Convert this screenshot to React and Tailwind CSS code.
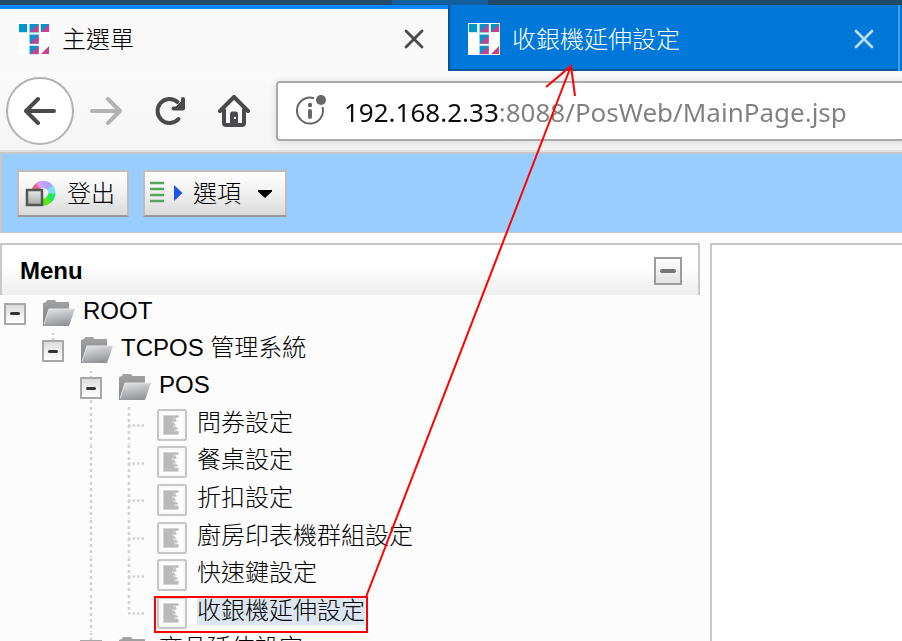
import React from "react";

const cjk = "font-['Liberation_Sans','Noto_Sans_CJK_TC',sans-serif]";

function Favicon() {
  return (
    <svg className="size-8 shrink-0" viewBox="0 0 32 32" aria-hidden="true">
      <rect width="32" height="32" fill="#fff" />
      <g fill="#8fd0e8">
        <rect x="11" y="1" width="10" height="9" />
        <rect x="22.500" y="1" width="9" height="8" />
        <rect x="11" y="11" width="10" height="10" />
        <rect x="11" y="22.500" width="10" height="9" />
        <rect x="1" y="8.500" width="8.500" height="1" />
      </g>
      <g fill="#0095cd">
        <rect x="1" y="1" width="8" height="8" />
        <rect x="12" y="1" width="8.500" height="8" />
        <rect x="23" y="1" width="8" height="8" />
        <rect x="12" y="12" width="8.500" height="8.500" />
        <rect x="12" y="23" width="8.500" height="8" />
      </g>
      <g fill="#cc3f8f">
        <path d="M20.500 1V9H12ZM31 1V9H23ZM20.500 12V20.500H12ZM20.500 23V31H12ZM31 23V31H23Z" />
      </g>
    </svg>
  );
}

function Tab({ title, className, closeClass }) {
  return (
    <div className={"flex shrink-0 items-center pr-6 " + className}>
      <Favicon />
      <span className="ml-3 flex-1 pt-0.5 text-2xl font-light">{title}</span>
      <button type="button" aria-label={"關閉 " + title} className={closeClass}>
        <svg className="size-5" viewBox="0 0 20 20" fill="none" stroke="currentColor" strokeWidth="2.8" strokeLinecap="round" aria-hidden="true">
          <path d="M2 2L18 18M18 2L2 18" />
        </svg>
      </button>
    </div>
  );
}

function NavIcon({ children }) {
  return (
    <svg className="size-8" viewBox="0 0 32 32" fill="none" stroke="currentColor" strokeWidth="4" strokeLinecap="round" strokeLinejoin="round" aria-hidden="true">
      {children}
    </svg>
  );
}

function Folder() {
  return (
    <svg className="mb-0.5 ml-[5px] h-[26px] w-8 shrink-0" viewBox="0 0 32 26" aria-hidden="true">
      <defs>
        <linearGradient id="folderFront" x1="0.300" y1="0" x2="0.600" y2="1">
          <stop offset="0" stopColor="#dedfe1" />
          <stop offset="1" stopColor="#8f9194" />
        </linearGradient>
        <linearGradient id="folderBack" x1="0" y1="0" x2="0" y2="1">
          <stop offset="0" stopColor="#a3a3a3" />
          <stop offset="1" stopColor="#808285" />
        </linearGradient>
      </defs>
      <path d="M0 26V3L3 2L4 0H12L13.500 2H26V10L20 26Z" fill="url(#folderBack)" />
      <path d="M1 25L6 9H32L26 26H1Z" fill="url(#folderFront)" />
      <path d="M1 24.500L6 9H31.500" fill="none" stroke="#e4e5e6" />
    </svg>
  );
}

function Page() {
  return (
    <svg className="ml-[5px] h-8 w-[30px] shrink-0" viewBox="0 0 30 32" aria-hidden="true">
      <rect x="1" y="1" width="28" height="30" rx="1.500" fill="#fff" stroke="#c6c6c6" strokeWidth="2" />
      <rect x="3" y="3" width="24" height="26" fill="none" stroke="#f1f1f1" strokeWidth="1" />
      <path d="M6 6H22V8.500L19 9V11L21 12L17 13.500V15L20 16L18 18L22 19.500L19 21L22 22V24L21 26H6Z" fill="#d3d3d3" />
      <path d="M7 7H21V8.500H16V10.500H19V12H15V14.500H18V16H16V18.500H20V20H17V22.500H21V25H7Z" fill="#bababa" />
    </svg>
  );
}

function Guide({ vertical, branch, end }) {
  return (
    <svg className="h-full w-[38px] shrink-0" stroke="#d2d2d2" strokeWidth="2.5" aria-hidden="true">
      {vertical && <line x1="15" y1="1" x2="15" y2={end ? "52%" : "100%"} strokeDasharray="3 3" />}
      {branch && <line x1="14" y1="52%" x2="32" y2="52%" strokeDasharray="2.5 2" />}
    </svg>
  );
}

function Toggle({ label, above, below }) {
  return (
    <span className="flex h-full w-[38px] shrink-0 flex-col pl-1">
      <svg className="min-h-0 w-[22px] flex-1" stroke="#d2d2d2" strokeWidth="2.5" aria-hidden="true">
        {above && <line x1="11" y1="1" x2="11" y2="100%" strokeDasharray="2 3" />}
      </svg>
      <button type="button" aria-label={"收合 " + label} className="flex size-[22px] items-center justify-center border-2 border-[#a8a8a8] bg-gradient-to-b from-[#dcdcdc] to-white">
        <span className="h-[3px] w-2.5 rounded-full bg-[#333]" />
      </button>
      <svg className="min-h-0 w-[22px] flex-1" stroke="#d2d2d2" strokeWidth="2.5" aria-hidden="true">
        {below && <line x1="11" y1="1" x2="11" y2="100%" strokeDasharray="3 3" />}
      </svg>
    </span>
  );
}

function Branch({ depth, label, height, above, below }) {
  return (
    <div className={"flex items-center " + height}>
      {Array.from({ length: depth }, (_, i) => (
        <Guide key={i} />
      ))}
      <Toggle label={label} above={above} below={below} />
      <Folder />
      <span className="ml-2 pb-1.5 text-2xl leading-7 font-light">{label}</span>
    </div>
  );
}

const leaves = ["問券設定", "餐桌設定", "折扣設定", "廚房印表機群組設定", "快速鍵設定", "收銀機延伸設定"];

function Leaf({ label, last }) {
  return (
    <li className="flex min-h-0 items-center">
      <Guide />
      <Guide />
      <Guide vertical />
      <Guide vertical branch end={last} />
      <Page />
      <span className="ml-2.5 pb-1">
        <a href="#" className={"block text-2xl leading-7 font-light " + (last ? "bg-[#dce6f1]" : "")}>{label}</a>
      </span>
    </li>
  );
}

const toolButton =
  "flex h-[47px] items-center border-2 border-[#bdbdbd] border-b-[#999] bg-gradient-to-b from-white via-[#f0f0f0] to-[#dadada] text-2xl font-light";

export default function App() {
  return (
    <div className={"relative flex h-screen flex-col overflow-hidden bg-[#fcfcfc] text-black " + cjk}>
      <div className="flex h-[5px] shrink-0 bg-[#214a66]">
        <span className="ml-[392px] w-24 bg-[#1260a0]" />
      </div>
      <div className="flex h-[66px] shrink-0 bg-[#0078d9]">
        <Tab title="主選單" className="w-[448px] border-t-4 border-[#0a84ff] bg-[#f9f9fa] pb-0.5 pl-[18px]" closeClass="text-[#4a4a4c]" />
        <Tab title="收銀機延伸設定" className="w-[450px] border-b-2 border-l-2 border-[#00559b] pt-1 pl-[18px] text-white" closeClass="text-[#b8dbf7]" />
        <span className="w-0.5 bg-[#4a9fe4]" />
      </div>

      <div className="flex h-[79px] shrink-0 items-center overflow-hidden bg-gradient-to-b from-[#fafafa] to-[#f5f5f6] pl-1.5 text-[#4a4a4c]">
        <button type="button" aria-label="上一頁" className="flex size-[68px] shrink-0 items-center justify-center rounded-full border-2 border-[#b1b1b1] bg-white">
          <NavIcon><path d="M30 16H3M14 4L2 16L14 28" /></NavIcon>
        </button>
        <button type="button" aria-label="下一頁" className="ml-4 shrink-0 text-[#b3b3b3]">
          <NavIcon><path d="M2 16H29M18 4L30 16L18 28" /></NavIcon>
        </button>
        <button type="button" aria-label="重新整理" className="ml-8 shrink-0">
          <NavIcon>
            <path d="M24.500 24A12 12 0 1 1 23.500 7" />
            <path d="M29 4V13.500H19.500" />
            <path d="M29 5L21 13H29Z" fill="currentColor" strokeWidth="1" />
          </NavIcon>
        </button>
        <button type="button" aria-label="首頁" className="ml-8 shrink-0">
          <NavIcon>
            <path d="M2 16L16 2L30 16" />
            <path d="M6 15V28Q6 30 8 30H24Q26 30 26 28V15" />
            <path d="M12 30V19Q12 16.500 14 16.500H18Q20 16.500 20 19V30Z" fill="currentColor" stroke="none" />
            <rect x="16" y="22" width="2" height="2" fill="#fff" stroke="none" />
          </NavIcon>
        </button>
        <div className="-mr-2 ml-[26px] flex h-[60px] min-w-0 flex-1 items-center rounded border-2 border-[#aaa] bg-white pl-[18px] shadow-[0_1px_8px_rgba(0,0,0,0.12)]">
          <svg className="size-8 shrink-0" viewBox="0 0 32 32" fill="none" aria-hidden="true">
            <path d="M18 3.200A13 13 0 1 0 26.500 12" stroke="#666" strokeWidth="2" />
            <circle cx="25" cy="5" r="5" fill="#666" />
            <circle cx="14" cy="10" r="2.200" fill="#666" />
            <path d="M14 16V22" stroke="#666" strokeWidth="4" strokeLinecap="round" />
          </svg>
          <input
            type="text"
            aria-label="網址"
            defaultValue="192.168.2.33:8088/PosWeb/MainPage.jsp"
            className="ml-4 h-10 min-w-0 flex-1 bg-[linear-gradient(90deg,#0c0c0d_154px,#808080_154px)] bg-clip-text pt-0.5 font-['Noto_Sans',sans-serif] text-[26px] text-transparent outline-none"
          />
        </div>
      </div>

      <div className="flex shrink-0 border-t-2 border-[#e0e0e0]">
        <div className="flex flex-1 gap-3.5 border-t-2 border-b border-l-2 border-[#c8c8c8] bg-[#99ccff] pt-4 pb-[15px] pl-[15px]">
          <button type="button" className={toolButton + " w-28 pl-1.5"}>
            <svg className="h-7 w-8" viewBox="0 0 32 28" aria-hidden="true">
              <defs>
                <linearGradient id="swatch" x1="0" y1="0" x2="0" y2="1">
                  <stop offset="0" stopColor="#e8ebe8" />
                  <stop offset="1" stopColor="#a5aca5" />
                </linearGradient>
              </defs>
              <g fill="none" strokeWidth="7">
                <path d="M10 11A9 9 0 0 1 14 5.500" stroke="#e2668c" />
                <path d="M13 6A9 9 0 0 1 20 4.500" stroke="#d59cf0" />
                <path d="M19.500 4.500A9 9 0 0 1 25.500 8" stroke="#a9a6ff" />
                <path d="M25 7.500A9 9 0 0 1 27 14" stroke="#80dcf0" />
                <path d="M27 13.500A9 9 0 0 1 23.500 20" stroke="#1ee85a" />
                <path d="M24 19.500A9 9 0 0 1 16 22" stroke="#5be71a" />
              </g>
              <rect x="2" y="10" width="15" height="15" fill="url(#swatch)" stroke="#555" strokeWidth="2.500" />
            </svg>
            <span className="ml-2.5">登出</span>
          </button>
          <button type="button" className={toolButton + " w-36 pl-1"}>
            <svg className="mb-1 h-6 w-9" viewBox="0 0 36 24" aria-hidden="true">
              <path d="M1 3H15M1 9H15M1 15H15M1 21H15" stroke="#5aa35f" strokeWidth="2.500" />
              <path d="M25 5L33.500 13L25 21Z" fill="#1f55ee" />
            </svg>
            <span className="ml-2">選項</span>
            <svg className="ml-4 h-2 w-4" viewBox="0 0 16 8" aria-hidden="true">
              <path d="M1 0H15V1.500L8 8L1 1.500Z" fill="#000" />
            </svg>
          </button>
        </div>
      </div>

      <main className="mt-2.5 flex min-h-0 flex-1 gap-2.5">
        <nav aria-label="Menu" className="w-[700px] shrink-0">
          <div className="flex h-[52px] items-center justify-between border-x-2 border-t-2 border-[#c8c8c8] bg-gradient-to-b from-white from-40% to-[#eeeeee] pt-0.5 pr-4 pl-[18px]">
            <h2 className="text-2xl font-bold">Menu</h2>
            <button type="button" aria-label="收合 Menu" className="flex size-7 items-center justify-center border-2 border-[#9c9c9c] bg-gradient-to-b from-white to-[#e2e2e2]">
              <span className="h-1 w-4 rounded-full bg-[#777]" />
            </button>
          </div>
          <Branch depth={0} label="ROOT" height="h-[37px]" />
          <Branch depth={1} label="TCPOS 管理系統" height="h-[38px]" above />
          <Branch depth={2} label="POS" height="h-9" above below />
          <ul className="grid h-[226px] grid-rows-6">
            {leaves.map((label, i) => (
              <Leaf key={label} label={label} last={i === leaves.length - 1} />
            ))}
          </ul>
          <Branch depth={2} label="商品延伸設定" height="h-[38px]" above below />
        </nav>
        <section className="flex-1 border-t-2 border-l-2 border-[#c8c8c8] bg-white" />
      </main>

      <svg className="pointer-events-none absolute top-0 left-0" width="902" height="641" fill="none" stroke="#f00" strokeWidth="2" aria-hidden="true">
        <rect x="155" y="597" width="212" height="35" />
        <path d="M366 597L571 66M546 87L571 66L575 96" />
      </svg>
    </div>
  );
}
